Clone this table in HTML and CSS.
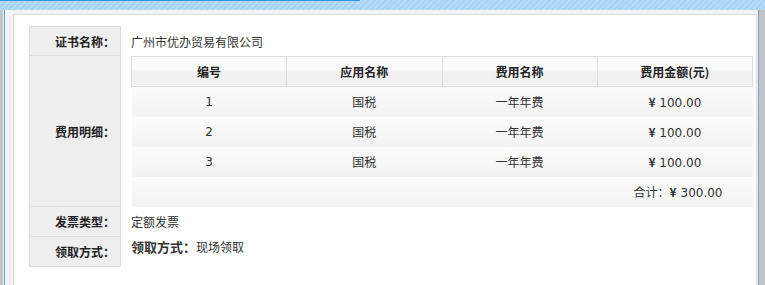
FILE: index.html
```html
<!DOCTYPE html>
<html lang="zh-CN">
<head>
<meta charset="utf-8">
<title>证书信息</title>
<link rel="stylesheet" href="styles.css">
</head>
<body>
<div class="topbar"><div class="topline"></div></div>
<div class="frame">
  <div class="frame-inner">
    <div class="panel">
      <table class="form">
        <tr class="r1">
          <th>证书名称：</th>
          <td class="val">广州市优办贸易有限公司</td>
        </tr>
        <tr class="r2">
          <th>费用明细：</th>
          <td class="val nested">
            <table class="fees">
              <thead>
                <tr>
                  <th>编号</th>
                  <th>应用名称</th>
                  <th>费用名称</th>
                  <th>费用金额(元)</th>
                </tr>
              </thead>
              <tbody>
                <tr><td>1</td><td>国税</td><td>一年年费</td><td><span class="yen">¥</span> 100.00</td></tr>
                <tr><td>2</td><td>国税</td><td>一年年费</td><td><span class="yen">¥</span> 100.00</td></tr>
                <tr><td>3</td><td>国税</td><td>一年年费</td><td><span class="yen">¥</span> 100.00</td></tr>
                <tr class="total"><td colspan="4"><span class="cjk">合计：</span><span class="yen">¥</span> 300.00</td></tr>
              </tbody>
            </table>
          </td>
        </tr>
        <tr class="r3">
          <th>发票类型：</th>
          <td class="val">定额发票</td>
        </tr>
        <tr class="r4">
          <th>领取方式：</th>
          <td class="val top"><b class="big">领取方式：</b>现场领取</td>
        </tr>
      </table>
    </div>
  </div>
</div>
</body>
</html>
```
FILE: styles.css
```css
html, body {
  margin: 0;
  padding: 0;
}
body {
  width: 765px;
  height: 285px;
  overflow: hidden;
  background: #c4c4c4;
  font-family: "DejaVu Sans", "Noto Sans CJK SC", sans-serif;
  font-size: 12px;
  color: #333;
}
.topbar {
  height: 10px;
  background: repeating-linear-gradient(135deg, #a9d3f3 0, #a9d3f3 2px, #b3daf6 2px, #b3daf6 4px);
}
.topline {
  width: 360px;
  height: 1px;
  background: #3097dc;
}
.frame {
  margin: 0 6px 0 3px;
  height: 275px;
  border-left: 1px solid #e3ecf7;
}
.frame-inner {
  height: 100%;
  box-sizing: border-box;
  border-left: 1px solid #6f9ddb;
  border-right: 1px solid #6f9ddb;
  background: #f3f3f3;
  padding: 4px 1px 0 8px;
}
.panel {
  height: 100%;
  box-sizing: border-box;
  background: #fff;
  border: 1px solid #dcdcdc;
  border-bottom: none;
  padding: 11px 2px 0 15px;
}
.form {
  width: 100%;
  border-collapse: collapse;
}
.form > tbody > tr > th {
  width: 85px;
  padding: 0 5px 0 0;
  border: 1px solid #dddddd;
  background: #eeeeee;
  text-align: right;
  font-weight: bold;
  font-family: "Noto Sans CJK SC", sans-serif;
  font-size: 12px;
  color: #222;
}
.cjk {
  font-family: "Noto Sans CJK SC", sans-serif;
}
.r1 { height: 29px; }
.r3 { height: 30px; }
.r4 { height: 30px; }
.val {
  padding: 0 0 0 10px;
  font-family: "Noto Sans CJK SC", sans-serif;
  font-size: 12px;
  color: #333;
}
.val.nested {
  padding: 0 0 0 10px;
  vertical-align: top;
}
.val.top {
  vertical-align: top;
  padding-top: 0;
}
.big {
  font-size: 13px;
  font-weight: bold;
  color: #333;
}
.fees {
  width: 100%;
  border-collapse: collapse;
  table-layout: fixed;
}
.fees th {
  height: 29px;
  padding: 0;
  border: 1px solid #dddddd;
  background: linear-gradient(to bottom, #fbfbfb 0, #fbfbfb 45%, #f1f1f1 55%, #f1f1f1 100%);
  font-family: "Noto Sans CJK SC", sans-serif;
  font-weight: bold;
  font-size: 12px;
  color: #222;
  text-align: center;
}
.fees td {
  height: 30px;
  padding: 0;
  text-align: center;
  background: linear-gradient(to bottom, #fbfbfb, #f3f3f3);
  font-family: "DejaVu Sans", "Noto Sans CJK SC", sans-serif;
  font-size: 12px;
  color: #333;
}
.fees .total td {
  text-align: right;
  padding-right: 30px;
}
.yen {
  font-weight: bold;
  font-family: "Noto Sans CJK SC", sans-serif;
}
```
